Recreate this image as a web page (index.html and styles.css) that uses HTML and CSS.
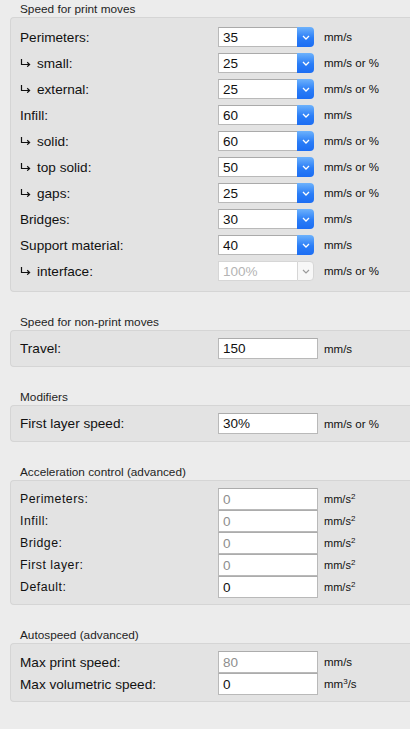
FILE: index.html
```html
<!DOCTYPE html>
<html>
<head>
<meta charset="utf-8">
<link rel="stylesheet" href="styles.css">
</head>
<body>
<div class="page">
  <section class="group">
    <div class="title">Speed for print moves</div>
    <div class="panel p-combo">
      <div class="row r26"><div class="label">Perimeters:</div><div class="combo"><div class="ctext">35</div><div class="cbtn"><svg width="8" height="5" viewBox="0 0 8 5"><path d="M1 1 L4 4 L7 1" fill="none" stroke="#fff" stroke-width="1.3"/></svg></div></div><div class="unit">mm/s</div></div>
      <div class="row r26"><div class="label"><svg class="arrow" width="11" height="8" viewBox="0 0 11 8"><path d="M1.5 0 V5.5 H9.5 M7.2 3.3 L9.6 5.5 L7.2 7.7" fill="none" stroke="#111" stroke-width="1.2"/></svg>small:</div><div class="combo"><div class="ctext">25</div><div class="cbtn"><svg width="8" height="5" viewBox="0 0 8 5"><path d="M1 1 L4 4 L7 1" fill="none" stroke="#fff" stroke-width="1.3"/></svg></div></div><div class="unit">mm/s or %</div></div>
      <div class="row r26"><div class="label"><svg class="arrow" width="11" height="8" viewBox="0 0 11 8"><path d="M1.5 0 V5.5 H9.5 M7.2 3.3 L9.6 5.5 L7.2 7.7" fill="none" stroke="#111" stroke-width="1.2"/></svg>external:</div><div class="combo"><div class="ctext">25</div><div class="cbtn"><svg width="8" height="5" viewBox="0 0 8 5"><path d="M1 1 L4 4 L7 1" fill="none" stroke="#fff" stroke-width="1.3"/></svg></div></div><div class="unit">mm/s or %</div></div>
      <div class="row r26"><div class="label">Infill:</div><div class="combo"><div class="ctext">60</div><div class="cbtn"><svg width="8" height="5" viewBox="0 0 8 5"><path d="M1 1 L4 4 L7 1" fill="none" stroke="#fff" stroke-width="1.3"/></svg></div></div><div class="unit">mm/s</div></div>
      <div class="row r26"><div class="label"><svg class="arrow" width="11" height="8" viewBox="0 0 11 8"><path d="M1.5 0 V5.5 H9.5 M7.2 3.3 L9.6 5.5 L7.2 7.7" fill="none" stroke="#111" stroke-width="1.2"/></svg>solid:</div><div class="combo"><div class="ctext">60</div><div class="cbtn"><svg width="8" height="5" viewBox="0 0 8 5"><path d="M1 1 L4 4 L7 1" fill="none" stroke="#fff" stroke-width="1.3"/></svg></div></div><div class="unit">mm/s or %</div></div>
      <div class="row r26"><div class="label"><svg class="arrow" width="11" height="8" viewBox="0 0 11 8"><path d="M1.5 0 V5.5 H9.5 M7.2 3.3 L9.6 5.5 L7.2 7.7" fill="none" stroke="#111" stroke-width="1.2"/></svg>top solid:</div><div class="combo"><div class="ctext">50</div><div class="cbtn"><svg width="8" height="5" viewBox="0 0 8 5"><path d="M1 1 L4 4 L7 1" fill="none" stroke="#fff" stroke-width="1.3"/></svg></div></div><div class="unit">mm/s or %</div></div>
      <div class="row r26"><div class="label"><svg class="arrow" width="11" height="8" viewBox="0 0 11 8"><path d="M1.5 0 V5.5 H9.5 M7.2 3.3 L9.6 5.5 L7.2 7.7" fill="none" stroke="#111" stroke-width="1.2"/></svg>gaps:</div><div class="combo"><div class="ctext">25</div><div class="cbtn"><svg width="8" height="5" viewBox="0 0 8 5"><path d="M1 1 L4 4 L7 1" fill="none" stroke="#fff" stroke-width="1.3"/></svg></div></div><div class="unit">mm/s or %</div></div>
      <div class="row r26"><div class="label">Bridges:</div><div class="combo"><div class="ctext">30</div><div class="cbtn"><svg width="8" height="5" viewBox="0 0 8 5"><path d="M1 1 L4 4 L7 1" fill="none" stroke="#fff" stroke-width="1.3"/></svg></div></div><div class="unit">mm/s</div></div>
      <div class="row r26"><div class="label">Support material:</div><div class="combo"><div class="ctext">40</div><div class="cbtn"><svg width="8" height="5" viewBox="0 0 8 5"><path d="M1 1 L4 4 L7 1" fill="none" stroke="#fff" stroke-width="1.3"/></svg></div></div><div class="unit">mm/s</div></div>
      <div class="row r26"><div class="label"><svg class="arrow" width="11" height="8" viewBox="0 0 11 8"><path d="M1.5 0 V5.5 H9.5 M7.2 3.3 L9.6 5.5 L7.2 7.7" fill="none" stroke="#111" stroke-width="1.2"/></svg>interface:</div><div class="combo disabled"><div class="ctext">100%</div><div class="cbtn"><svg width="8" height="5" viewBox="0 0 8 5"><path d="M1 1 L4 4 L7 1" fill="none" stroke="#9a9a9a" stroke-width="1.2"/></svg></div></div><div class="unit">mm/s or %</div></div>
    </div>
  </section>

  <section class="group">
    <div class="title">Speed for non-print moves</div>
    <div class="panel p-single">
      <div class="row r21"><div class="label">Travel:</div><div class="field">150</div><div class="unit">mm/s</div></div>
    </div>
  </section>

  <section class="group">
    <div class="title">Modifiers</div>
    <div class="panel p-single">
      <div class="row r21"><div class="label">First layer speed:</div><div class="field">30%</div><div class="unit">mm/s or %</div></div>
    </div>
  </section>

  <section class="group">
    <div class="title">Acceleration control (advanced)</div>
    <div class="panel p-stack small">
      <div class="row r22"><div class="label">Perimeters:</div><div class="field dim">0</div><div class="unit">mm/s<sup>2</sup></div></div>
      <div class="row r22"><div class="label">Infill:</div><div class="field dim">0</div><div class="unit">mm/s<sup>2</sup></div></div>
      <div class="row r22"><div class="label">Bridge:</div><div class="field dim">0</div><div class="unit">mm/s<sup>2</sup></div></div>
      <div class="row r22"><div class="label">First layer:</div><div class="field dim">0</div><div class="unit">mm/s<sup>2</sup></div></div>
      <div class="row r22"><div class="label">Default:</div><div class="field">0</div><div class="unit">mm/s<sup>2</sup></div></div>
    </div>
  </section>

  <section class="group">
    <div class="title">Autospeed (advanced)</div>
    <div class="panel p-stack">
      <div class="row r22"><div class="label">Max print speed:</div><div class="field dim">80</div><div class="unit">mm/s</div></div>
      <div class="row r22"><div class="label">Max volumetric speed:</div><div class="field">0</div><div class="unit">mm<sup>3</sup>/s</div></div>
    </div>
  </section>
</div>
</body>
</html>
```

FILE: styles.css
```css
html, body {
  margin: 0;
  padding: 0;
  background: #ececec;
}
body {
  font-family: "Liberation Sans", Arial, Helvetica, sans-serif;
  color: #161616;
  width: 410px;
  height: 729px;
  overflow: hidden;
}
.page {
  display: flex;
  flex-direction: column;
  padding-top: 2px;
}
.group {
  display: flex;
  flex-direction: column;
}
.group + .group {
  margin-top: 23px;
}
.title {
  height: 15px;
  line-height: 15px;
  font-size: 11.8px;
  color: #1e1e1e;
  padding-left: 20px;
}
.panel {
  margin-left: 10px;
  background: #e3e3e3;
  border: 1px solid #d5d5d5;
  border-right: none;
  border-radius: 4px 0 0 4px;
  padding-left: 9px;
  display: flex;
  flex-direction: column;
}
.p-combo {
  padding-top: 6px;
  padding-bottom: 7px;
}
.p-single {
  padding-top: 7px;
  padding-bottom: 7px;
}
.p-stack {
  padding-top: 7px;
  padding-bottom: 6px;
}
.row {
  display: flex;
  align-items: center;
}
.r26 { height: 26px; }
.r21 { height: 21px; }
.r22 { height: 22px; }
.label {
  width: 198px;
  font-size: 13.6px;
  color: #111;
  white-space: nowrap;
}
.arrow {
  vertical-align: 1px;
  margin-right: 6px;
}
.small .label {
  font-size: 12.3px;
  letter-spacing: 0.5px;
}
.unit {
  margin-left: 6px;
  font-size: 11.5px;
  color: #111;
  white-space: nowrap;
}
.unit sup {
  font-size: 8px;
  line-height: 0;
  vertical-align: 4px;
}
.small .unit {
  font-size: 11px;
}
.combo {
  width: 100px;
  height: 20px;
  display: flex;
}
.ctext {
  width: 79px;
  box-sizing: border-box;
  height: 20px;
  background: #fff;
  border: 1px solid #b9b9b9;
  border-top-color: #aaaaaa;
  border-right: none;
  font-size: 13.5px;
  line-height: 19px;
  padding-left: 4px;
  color: #111;
}
.cbtn {
  width: 17px;
  height: 20px;
  box-sizing: border-box;
  border-radius: 0 4px 4px 0;
  background: linear-gradient(#6db2fc, #2a7df7 55%, #1c6df3);
  display: flex;
  align-items: center;
  justify-content: center;
}
.combo.disabled .ctext {
  color: #b4b4b4;
  border-color: #d6d6d6;
}
.combo.disabled .cbtn {
  background: #f7f7f7;
  border: 1px solid #d6d6d6;
}
.field {
  width: 100px;
  box-sizing: border-box;
  height: 21px;
  background: #fff;
  border: 1px solid #b9b9b9;
  border-top-color: #acacac;
  font-size: 13.5px;
  line-height: 20px;
  padding-left: 4px;
  color: #111;
}
.r22 .field {
  height: 22px;
  line-height: 21px;
}
.field.dim {
  color: #8e8e8e;
}
```
